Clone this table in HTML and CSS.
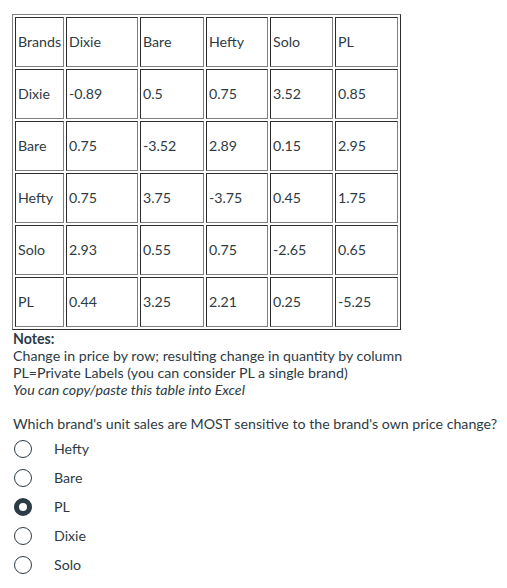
FILE: index.html
```html
<!DOCTYPE html>
<html>
<head>
<meta charset="utf-8">
<link rel="stylesheet" href="styles.css">
</head>
<body>
<div class="page">
  <table class="grid">
    <colgroup>
      <col class="c1"><col class="c2"><col class="c3"><col class="c4"><col class="c5"><col class="c6">
    </colgroup>
    <tbody>
      <tr><td>Brands</td><td>Dixie</td><td>Bare</td><td>Hefty</td><td>Solo</td><td>PL</td></tr>
      <tr><td>Dixie</td><td>-0.89</td><td>0.5</td><td>0.75</td><td>3.52</td><td>0.85</td></tr>
      <tr><td>Bare</td><td>0.75</td><td>-3.52</td><td>2.89</td><td>0.15</td><td>2.95</td></tr>
      <tr><td>Hefty</td><td>0.75</td><td>3.75</td><td>-3.75</td><td>0.45</td><td>1.75</td></tr>
      <tr><td>Solo</td><td>2.93</td><td>0.55</td><td>0.75</td><td>-2.65</td><td>0.65</td></tr>
      <tr><td>PL</td><td>0.44</td><td>3.25</td><td>2.21</td><td>0.25</td><td>-5.25</td></tr>
    </tbody>
  </table>
  <div class="notes">
    <div class="notes-title">Notes:</div>
    <div>Change in price by row; resulting change in quantity by column</div>
    <div>PL=Private Labels (you can consider PL a single brand)</div>
    <div class="em">You can copy/paste this table into Excel</div>
  </div>
  <p class="question">Which brand's unit sales are MOST sensitive to the brand's own price change?</p>
  <ul class="options">
    <li class="opt"><span class="radio"></span><span>Hefty</span></li>
    <li class="opt"><span class="radio"></span><span>Bare</span></li>
    <li class="opt"><span class="radio checked"></span><span>PL</span></li>
    <li class="opt"><span class="radio"></span><span>Dixie</span></li>
    <li class="opt"><span class="radio"></span><span>Solo</span></li>
  </ul>
</div>
</body>
</html>
```
FILE: styles.css
```css
html, body {
  margin: 0;
  padding: 0;
  background: #ffffff;
}
body {
  font-family: Lato, "Liberation Sans", sans-serif;
  font-size: 14.2px;
  color: #2d3b45;
}
.page {
  padding: 14px 0 0 12px;
}
.grid {
  border-collapse: separate;
  border-spacing: 2px;
  border: 1px outset #808080;
  table-layout: fixed;
  width: 389px;
}
.c1 { width: 49px; }
.c2 { width: 72px; }
.c3 { width: 64px; }
.c4 { width: 62px; }
.c5 { width: 63px; }
.c6 { width: 63px; }
.grid td {
  border: 1px inset #808080;
  padding: 1px 1px 1px 2px;
  height: 46px;
  vertical-align: middle;
  line-height: 20px;
  white-space: nowrap;
}
.notes {
  line-height: 17px;
  margin-top: 0;
  padding-left: 1px;
}
.notes-title {
  font-weight: bold;
}
.em {
  font-style: italic;
}
.question {
  margin: 17px 0 0 1px;
  line-height: 17px;
}
.options {
  list-style: none;
  margin: 2px 0 0 0;
  padding: 0;
}
.opt {
  display: flex;
  align-items: center;
  height: 29px;
}
.radio {
  box-sizing: border-box;
  width: 18px;
  height: 18px;
  border: 1.5px solid #2d3b45;
  border-radius: 50%;
  margin: 0 22px 0 2px;
}
.radio.checked {
  border-width: 5px;
}
```
